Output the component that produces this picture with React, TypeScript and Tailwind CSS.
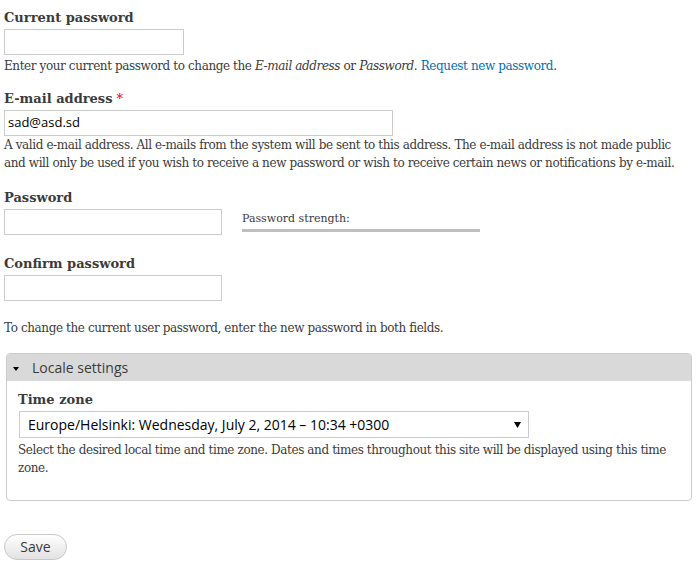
import React from "react";

function Label({ children, required }: { children: React.ReactNode; required?: boolean }) {
  return (
    <label className="block font-bold text-[13px] leading-[20px] text-[#3b3b3b] font-['DejaVu_Serif',serif]">
      {children}
      {required && <span className="text-[#e00] ml-[4px] font-normal" title="This field is required.">*</span>}
    </label>
  );
}

function Desc({ children, className = "" }: { children: React.ReactNode; className?: string }) {
  return (
    <div className={`text-[12px] leading-[18px] tracking-[-0.4px] text-[#3b3b3b] font-['DejaVu_Serif',serif] ${className}`}>
      {children}
    </div>
  );
}

function TextInput({ width, value }: { width: string; value?: string }) {
  return (
    <div className={`${width} h-[26px] border border-[#ccc] bg-white flex items-center px-[3px] text-[13px] text-black font-['Open_Sans',sans-serif]`}>
      {value}
    </div>
  );
}

export default function App() {
  return (
    <div className="w-[700px] h-[566px] bg-white pl-[4px] pr-[8px] pt-[8px] font-['DejaVu_Serif',serif]">
      {/* Current password */}
      <div>
        <Label>Current password</Label>
        <div className="mt-[1px]">
          <TextInput width="w-[180px]" />
        </div>
        <Desc className="mt-[2px]">
          Enter your current password to change the <em>E-mail address</em> or <em>Password</em>.{" "}
          <a className="text-[#0071b3]">Request new password</a>.
        </Desc>
      </div>

      {/* Email */}
      <div className="mt-[14px]">
        <Label required>E-mail address</Label>
        <div className="mt-[1px]">
          <TextInput width="w-[389px]" value="sad@asd.sd" />
        </div>
        <Desc className="w-[682px]">
          A valid e-mail address. All e-mails from the system will be sent to this address. The e-mail address is not made public and will only be used if you wish to receive a new password or wish to receive certain news or notifications by e-mail.
        </Desc>
      </div>

      {/* Password */}
      <div className="mt-[16px]">
        <Label>Password</Label>
        <div className="mt-[1px] flex items-start">
          <TextInput width="w-[218px]" />
          <div className="ml-[20px] w-[238px] mt-[3px]">
            <div className="text-[11px] leading-[14px] text-[#3b3b3b] font-['DejaVu_Serif',serif]">Password strength:</div>
            <div className="mt-[3px] h-[3px] bg-[#c0c0c0]" />
          </div>
        </div>
      </div>

      {/* Confirm */}
      <div className="mt-[19px]">
        <Label>Confirm password</Label>
        <div className="mt-[1px]">
          <TextInput width="w-[218px]" />
        </div>
      </div>

      <Desc className="mt-[18px]">To change the current user password, enter the new password in both fields.</Desc>

      {/* Fieldset */}
      <div className="mt-[16px] ml-[2px] w-[686px] h-[148px] border border-[#ccc] rounded-[4px] overflow-hidden">
        <div className="h-[27px] bg-[#d9d9d9] flex items-center pl-[6px] font-['Open_Sans',sans-serif] text-[14px] text-[#3b3b3b]">
          <svg width="6" height="4" viewBox="0 0 6 4" className="mr-[13px] mt-[2px]">
            <path d="M0 0 L6 0 L3 4 Z" fill="#000" />
          </svg>
          Locale settings
        </div>
        <div className="px-[11px] pt-[9px]">
          <Label>Time zone</Label>
          <div className="mt-[1px] w-[510px] h-[27px] border border-[#ccc] ml-[1px] flex items-center justify-between pl-[8px] pr-[7px] text-[14px] text-black font-['Open_Sans',sans-serif]">
            <span>Europe/Helsinki: Wednesday, July 2, 2014 – 10:34 +0300</span>
            <svg width="7" height="7" viewBox="0 0 7 7"><path d="M0 1 L7 1 L3.5 7 Z" fill="#000" /></svg>
          </div>
          <Desc className="mt-[3px]">
            Select the desired local time and time zone. Dates and times throughout this site will be displayed using this time zone.
          </Desc>
        </div>
      </div>

      <div className="mt-[33px]">
        <button className="w-[63px] h-[26px] rounded-full border border-[#c8c8c8] bg-gradient-to-b from-[#ffffff] to-[#e2e2e2] text-[14px] text-[#3a3a3a] font-['Open_Sans',sans-serif] leading-none">
          Save
        </button>
      </div>
    </div>
  );
}
